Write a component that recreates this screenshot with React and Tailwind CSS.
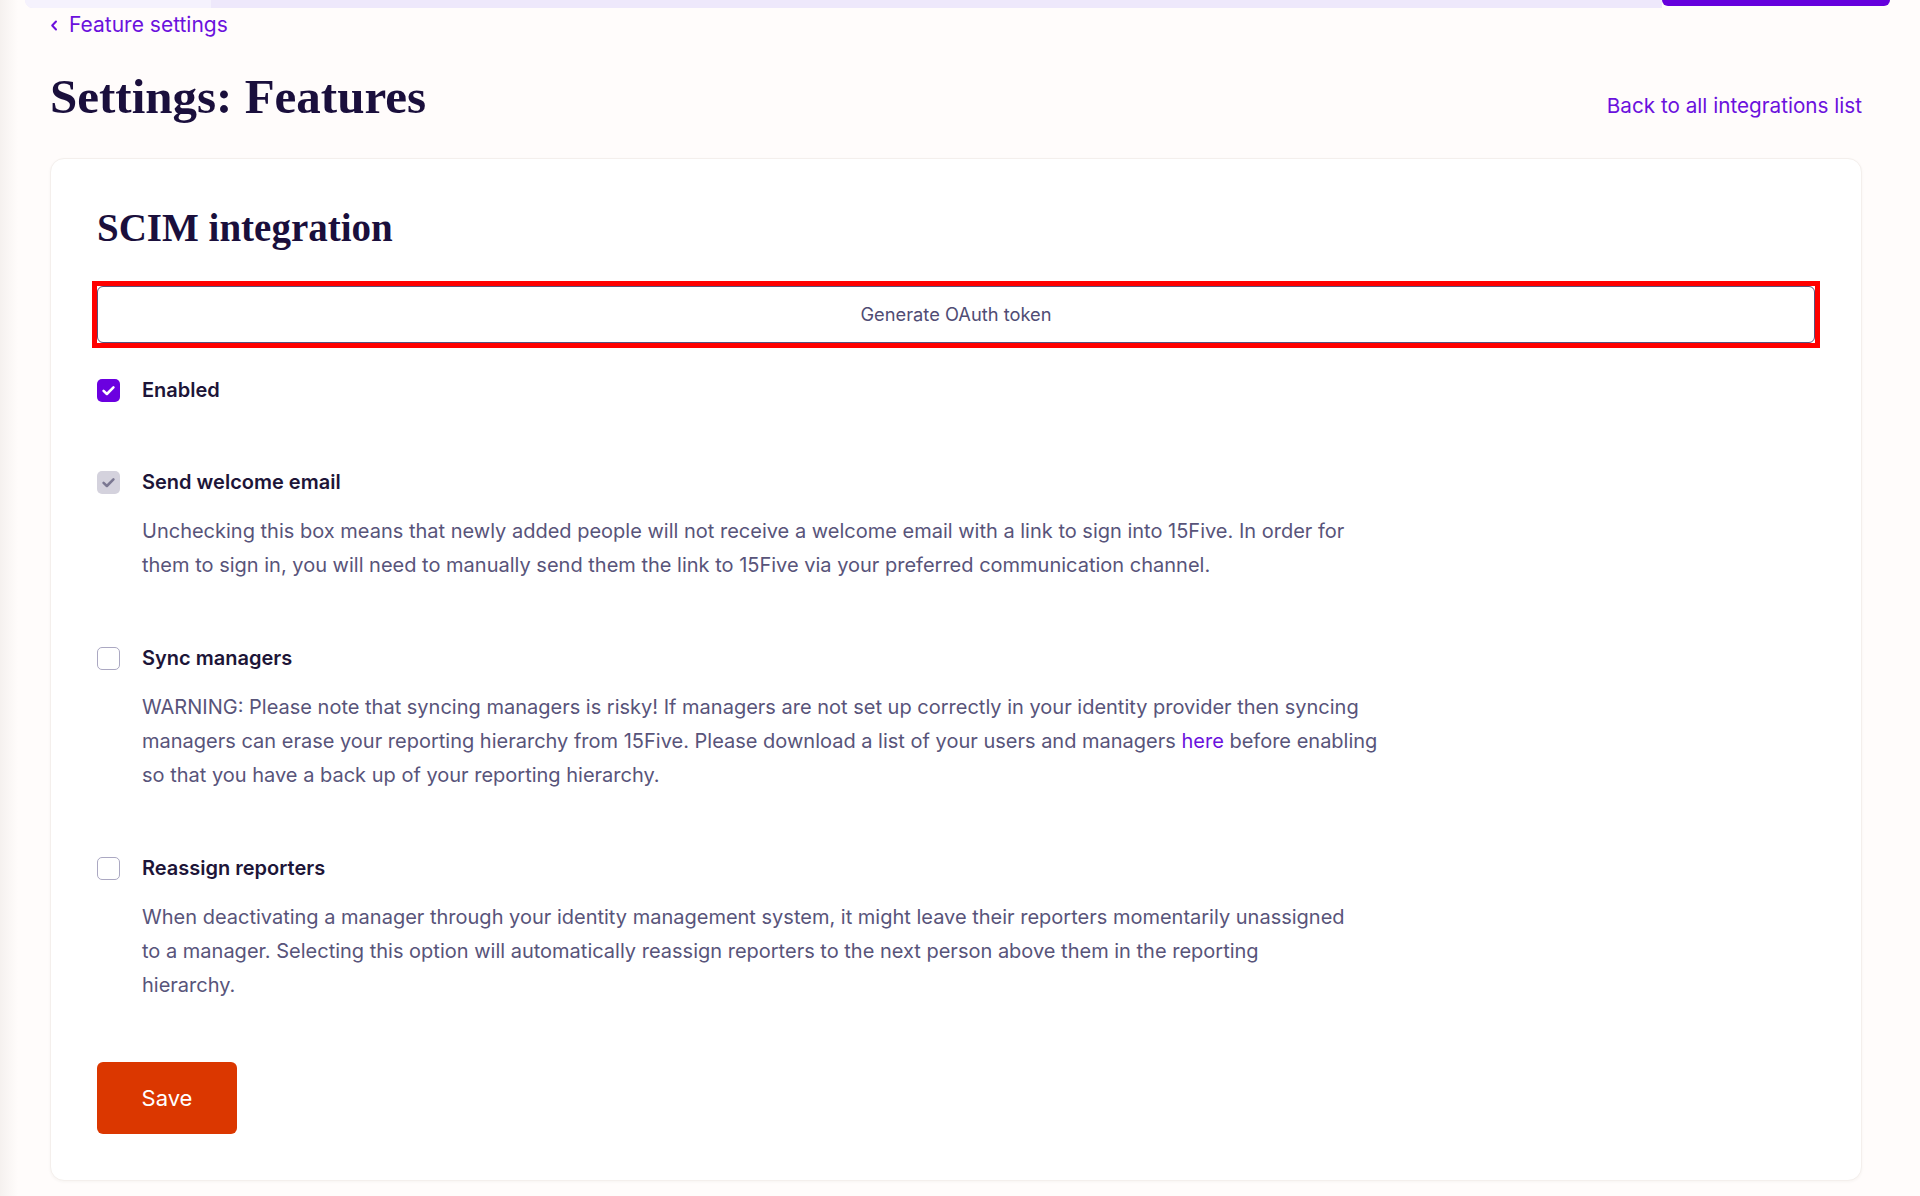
import { useState } from 'react'

const sans = "font-['Inter','Liberation_Sans',sans-serif]"
const serif = "font-['Liberation_Serif','Times_New_Roman',serif]"

function Check({ color }) {
  return (
    <svg viewBox="0 0 20 20" fill="none" className="w-[17px] h-[17px]">
      <path d="M4.2 10.4l3.9 3.7L15.8 6.3" stroke={color} strokeWidth="3" strokeLinecap="round" strokeLinejoin="round" />
    </svg>
  )
}

function Box({ checked, disabled, onClick }) {
  if (disabled) {
    return (
      <span className="w-[23px] h-[23px] shrink-0 rounded-[5px] bg-[#d4d2dd] flex items-center justify-center">
        <Check color="#7b7892" />
      </span>
    )
  }
  if (checked) {
    return (
      <button onClick={onClick} className="w-[23px] h-[23px] shrink-0 rounded-[5px] bg-[#6b00e0] flex items-center justify-center">
        <Check color="#ffffff" />
      </button>
    )
  }
  return (
    <button onClick={onClick} className="w-[23px] h-[23px] shrink-0 rounded-[5px] border-[1.5px] border-[#aba8c2] bg-white" />
  )
}

function Option({ label, checked, disabled, onToggle, children, className = '' }) {
  return (
    <div className={`flex gap-[22px] ${className}`}>
      <div className="h-[24px] flex items-center">
        <Box checked={checked} disabled={disabled} onClick={onToggle} />
      </div>
      <div>
        <p className="h-[24px] leading-[24px] text-[20px] font-semibold text-[#1d1538]">{label}</p>
        {children && (
          <p className="mt-[20px] text-[20px] leading-[34px] text-[#58547a]">{children}</p>
        )}
      </div>
    </div>
  )
}

export default function App() {
  const [enabled, setEnabled] = useState(true)
  const [sync, setSync] = useState(false)
  const [reassign, setReassign] = useState(false)

  return (
    <div className={`min-h-screen bg-[linear-gradient(to_right,#f5f1ef,#fffcfb_18px)] ${sans}`}>
      {/* top nav strip */}
      <div className="flex h-[10px]">
        <div className="w-[25px]" />
        <div className="flex-1 h-[8px] flex rounded-bl-[12px] overflow-hidden bg-[#eee8fb]">
          <div className="w-[186px] bg-[#f5f2fd]" />
        </div>
        <div className="w-[228px] h-[6px] rounded-b-[16px] bg-[#6600dd]" />
        <div className="w-[30px]" />
      </div>

      <div className="pl-[50px] pr-[58px]">
        <a href="#" className="flex items-center gap-[11px] h-[30px] text-[21px] text-[#6b11dd]">
          <svg viewBox="0 0 8 11" fill="none" className="w-[8px] h-[11px]">
            <path d="M6 1.5L2.2 5.5 6 9.5" stroke="currentColor" strokeWidth="2" strokeLinecap="round" strokeLinejoin="round" />
          </svg>
          Feature settings
        </a>

        <div className="mt-[29px] flex items-baseline justify-between">
          <h1 className={`${serif} text-[49px] leading-[56px] font-bold text-[#1a0f3c]`}>Settings: Features</h1>
          <a href="#" className="text-[20.7px] text-[#6b11dd]">Back to all integrations list</a>
        </div>

        <div className="mt-[33px] bg-white rounded-[14px] border border-[#f4efec] shadow-[0_1px_3px_rgba(60,40,30,0.04)] px-[46px] pt-[46px] pb-[46px]">
          <h2 className={`${serif} text-[39px] leading-[46px] font-bold text-[#1a0f3c]`}>SCIM integration</h2>

          {/* red highlight box around the token button */}
          <div className="mt-[30px] -mx-[5px] border-[5px] border-[#ff0000]">
            <button className="w-full h-[57px] rounded-[6px] border border-[#57537d] bg-white text-[18.3px] text-[#504c74]">
              Generate OAuth token
            </button>
          </div>

          <div className="mt-[30px]">
            <Option label="Enabled" checked={enabled} onToggle={() => setEnabled(!enabled)} />

            <Option label="Send welcome email" checked disabled className="mt-[68px]">
              Unchecking this box means that newly added people will not receive a welcome email with a link to sign into 15Five. In order for<br />
              them to sign in, you will need to manually send them the link to 15Five via your preferred communication channel.
            </Option>

            <Option label="Sync managers" checked={sync} onToggle={() => setSync(!sync)} className="mt-[64px]">
              WARNING: Please note that syncing managers is risky! If managers are not set up correctly in your identity provider then syncing<br />
              managers can erase your reporting hierarchy from 15Five. Please download a list of your users and managers{' '}
              <a href="#" className="text-[#6b11dd]">here</a> before enabling<br />
              so that you have a back up of your reporting hierarchy.
            </Option>

            <Option label="Reassign reporters" checked={reassign} onToggle={() => setReassign(!reassign)} className="mt-[64px]">
              When deactivating a manager through your identity management system, it might leave their reporters momentarily unassigned<br />
              to a manager. Selecting this option will automatically reassign reporters to the next person above them in the reporting<br />
              hierarchy.
            </Option>
          </div>

          <button className="mt-[60px] w-[140px] h-[72px] rounded-[6px] bg-[#db3700] text-[22px] text-white">
            Save
          </button>
        </div>
      </div>
    </div>
  )
}
